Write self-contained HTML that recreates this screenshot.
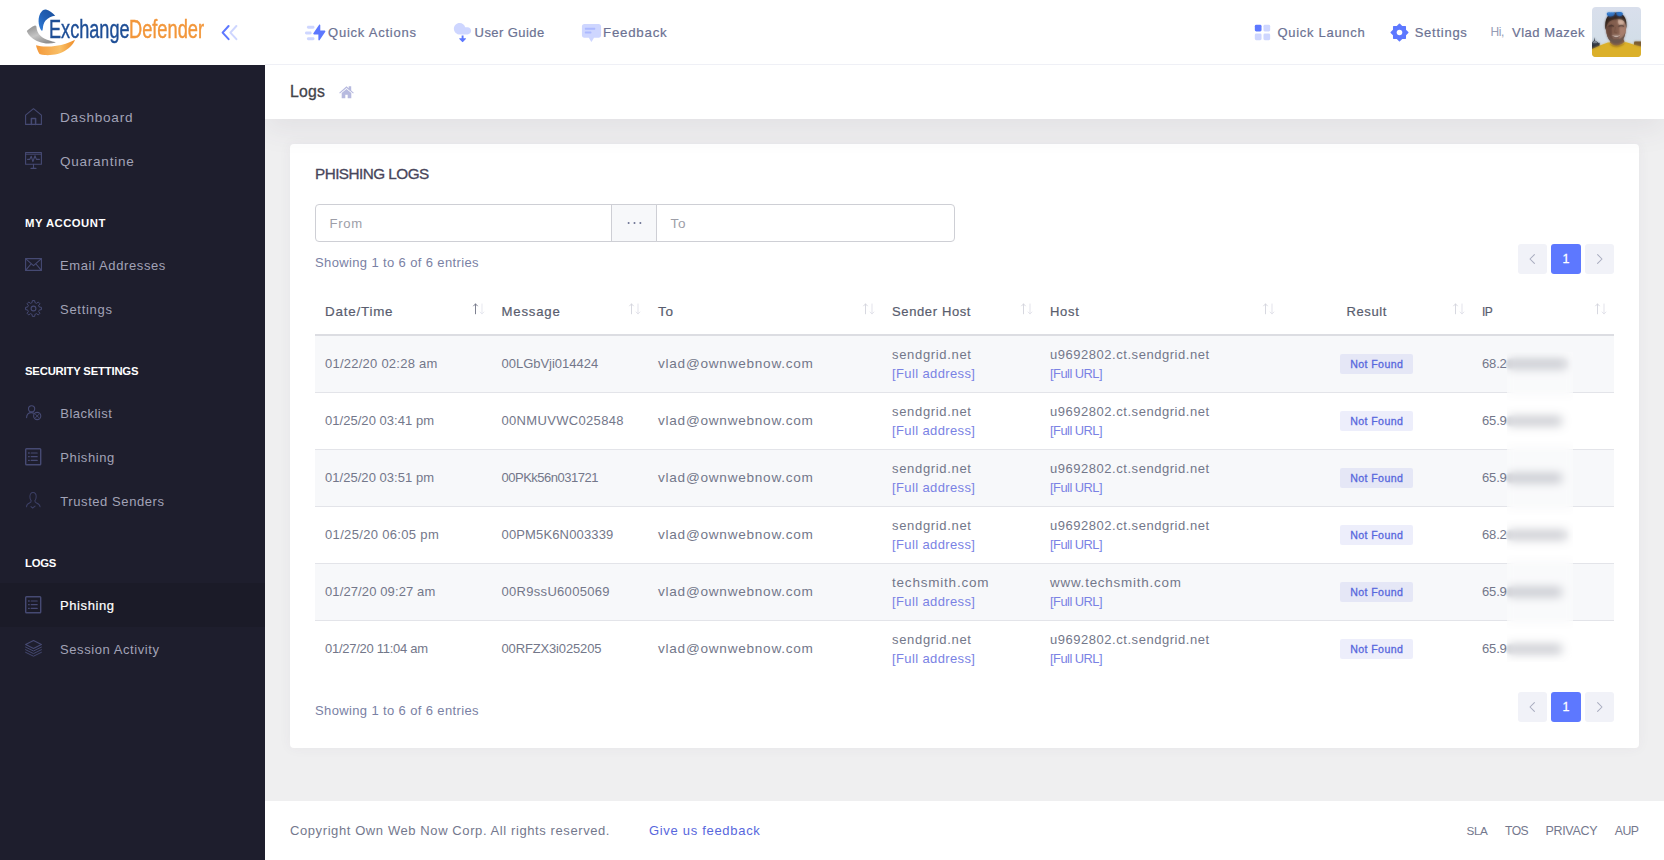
<!DOCTYPE html>
<html lang="en"><head><meta charset="utf-8"><title>ExchangeDefender - Phishing Logs</title>
<style>
*{box-sizing:border-box;margin:0;padding:0}
html,body{width:1664px;height:860px;overflow:hidden}
body{background:#efeff0;font-family:"Liberation Sans",sans-serif;font-size:14px;color:#646c9a;position:relative;-webkit-font-smoothing:antialiased}
a{text-decoration:none;color:inherit}
ul{list-style:none}
.m5{-webkit-text-stroke:0.3px currentColor}
.m4{-webkit-text-stroke:0.2px currentColor}
.abs{position:absolute;white-space:pre}
/* brand */
#brand{z-index:3;position:absolute;left:0;top:0;width:265px;height:65px;background:#fff}
#brand .logo-txt{-webkit-text-stroke:0.42px currentColor;position:absolute;left:49.2px;top:0;height:65px;white-space:pre;font-size:25.8px;line-height:1;transform-origin:0 0}
/* header */
#header{z-index:3;position:absolute;left:265px;top:0;width:1399px;height:65px;background:#fff;border-bottom:1px solid #eff0f6}
#header .hm{position:absolute;top:0;height:64px;display:flex;align-items:center;color:#6c7293;white-space:pre}
#header svg{position:absolute}
/* aside */
#aside{z-index:3;position:absolute;left:0;top:65px;width:265px;height:795px;background:#1e1e2d}
#aside ul{position:absolute;left:0;top:30px;width:265px}
#aside li.item{height:44px;display:flex;align-items:center;padding-left:25px;color:#a2a3b7;white-space:pre;position:relative}
#aside li.item svg{position:absolute;overflow:visible}
#aside li.item span.t{position:absolute;left:60px;top:0;height:44px;display:flex;align-items:center}
#aside li.item.active{background:#1b1b28;color:#fff}
#aside li.sec{height:40px;margin-top:20px;display:flex;align-items:center;padding-left:25px;color:#fff;font-weight:700;white-space:pre}
/* subheader */
#subheader{position:absolute;left:265px;top:65px;width:1399px;height:54px;background:#fff;box-shadow:0 10px 30px 0 rgba(72,66,90,.08);z-index:2}
#subheader h3{position:absolute;left:25px;top:0;height:54px;display:flex;align-items:center;font-weight:400;color:#434349;white-space:pre}
/* card */
#card{position:absolute;left:290px;top:144px;width:1349px;height:604px;background:#fff;border-radius:4px;box-shadow:0 0 13px 0 rgba(82,63,105,.05)}
#card h3.title{position:absolute;left:25px;top:13px;height:34px;display:flex;align-items:center;font-weight:400;color:#48465b;white-space:pre}
.igroup{position:absolute;left:25px;top:60px;width:640px;height:38px;display:flex}
.igroup .inp{height:38px;border:1px solid #cecfd5;background:#fff;display:flex;align-items:center;padding-left:13.5px;color:#9d9ea8;white-space:pre}
.igroup .inp.l{width:297px;border-radius:4px 0 0 4px}
.igroup .addon{width:46px;margin-left:-1px;height:38px;border:1px solid #cecfd5;background:#f7f8fa;display:flex;align-items:center;justify-content:center;color:#6c7293}
.igroup .inp.r{width:299px;margin-left:-1px;border-radius:0 4px 4px 0}
.info{position:absolute;left:25px;color:#7a81a4;white-space:pre;height:20px;display:flex;align-items:center}
.pager{position:absolute;height:29.5px;display:block}
.pager span{position:absolute;top:0;height:29.5px;border-radius:3px;background:#f1f2f8;display:flex;align-items:center;justify-content:center;color:#fff}
.pager span.on{background:#5d78ff}
/* table */
table#logs{position:absolute;left:25px;top:145px;width:1299px;border-collapse:separate;border-spacing:0;table-layout:fixed}
table#logs th{height:47px;border-bottom:2px solid #dcdde2;text-align:left;font-weight:400;color:#595d6e;padding:0 0 2px 10px;position:relative;white-space:pre;vertical-align:middle}
table#logs th svg{position:absolute;right:7px;top:14px}
table#logs td{height:57px;border-bottom:1px solid #e3e4e9;padding:0 0 1px 10px;color:#73778a;line-height:19px;vertical-align:middle;white-space:pre}
table#logs tr.odd td{background:#f7f8fa}
table#logs tr:last-child td{border-bottom-color:transparent}
table#logs td a{color:#7a82e4}
table#logs .c{text-align:center;padding-left:0}
table#logs th.c{padding-right:20px}
.badge{display:inline-flex;align-items:center;justify-content:center;width:73px;height:20px;padding-top:1.5px;position:relative;top:0.5px;border-radius:2px;background:rgba(88,103,221,.11);color:#5867dd;vertical-align:middle}
/* footer */
#footer{position:absolute;left:265px;top:801px;width:1399px;height:59px;background:#fff}
#footer .f{position:absolute;top:0;height:59px;display:flex;align-items:center;color:#74788d;white-space:pre}
#ipblur{position:absolute;left:1507px;top:352px;width:66px;height:309.5px;backdrop-filter:blur(4.6px);-webkit-backdrop-filter:blur(4.6px);background:rgba(255,255,255,.32)}
.smudge{display:inline-block;height:10px;border-radius:4px;background:rgba(90,94,112,.46);vertical-align:middle;margin-left:0;filter:blur(1.2px)}
</style></head>
<body>

<div id="brand">
 <svg style="position:absolute;left:24px;top:6px" width="56" height="52" viewBox="24 6 56 52">
  <defs>
   <linearGradient id="gb" x1="1" y1="0" x2="0" y2="1"><stop offset="0" stop-color="#1a4f9c"/><stop offset=".5" stop-color="#215fb4"/><stop offset="1" stop-color="#2f7fdc"/></linearGradient>
   <linearGradient id="gg" x1="0" y1="0" x2="0.600" y2="1"><stop offset="0" stop-color="#8a8a8a"/><stop offset=".55" stop-color="#c4c4c4"/><stop offset="1" stop-color="#909090"/></linearGradient>
   <linearGradient id="go" x1="0" y1="0" x2="1" y2="0"><stop offset="0" stop-color="#f3983a"/><stop offset=".62" stop-color="#f9c067"/><stop offset=".85" stop-color="#f3a040"/><stop offset="1" stop-color="#ef8f2c"/></linearGradient>
  </defs>
  <path d="M46,9.5 C49.6,10.6 52.800,13 55.200,15.700 C51.500,15.900 48.200,17.800 45.600,20.600 C43.800,22.800 43,25.800 42.900,28 C42.800,29.400 42.500,30.400 42.100,31 C40.600,30 39.300,27 38.800,24 C38.300,20.500 38.600,16.500 40.200,13.500 C41.600,11 43.600,9.300 46,9.500 Z" fill="url(#gb)"/>
  <path d="M26.800,31 C28.800,28.800 31.800,26.800 35,25.500 C36,25.600 36.300,26 36.400,26.600 C36.500,28.600 36.900,30.200 37.500,31.600 C38.600,34 40.200,35.800 42.200,37.200 C44.800,39 48,40.200 51,41 C53,41.600 54.800,42 55.800,42.400 C52.500,43.500 49,43.700 46,43.400 C42.800,43.100 39.600,42.300 36.900,41.100 C34.400,40 32.200,38.400 30.400,36.600 C28.800,35 27.600,33 26.800,31 Z" fill="url(#gg)"/>
  <path d="M36,45.300 C39.200,46.200 42.600,46.600 46,46.600 C49.600,46.600 53.200,46.300 56.500,45.700 C59.700,45.200 62.800,44.600 65.600,43.700 C69.200,42.600 72.400,41.300 75,39.800 C74.200,42.200 72.700,44.400 70.800,46.300 C68.400,48.800 65.500,50.700 62.300,52.200 C59.300,53.600 56,54.400 52.600,54.800 C50,55.200 47.300,55.300 44.700,55.100 C42.900,55 41.100,54.700 39.500,54.100 C38.500,52.800 37.800,51.200 37.300,49.600 C36.800,48.200 36.300,46.800 36,45.300 Z" fill="url(#go)"/>
 </svg>
 <span class="logo-txt" style="top:16.56px;height:26px;color:#1e4e96;transform:scaleX(0.7024)">Exchange</span>
 <span class="logo-txt" style="left:129.2px;top:16.56px;height:26px;color:#f2963a;transform:scaleX(0.7066)">Defender</span>
 <svg style="position:absolute;left:219px;top:22.3px" width="22" height="22" viewBox="0 0 22 22" fill="none" stroke-width="2" stroke-linecap="round" stroke-linejoin="round">
  <path d="M9.6,4 L3.6,10.6 L9.6,17.2" stroke="#5d78ff"/>
  <path d="M17.4,4 L11.4,10.6 L17.4,17.2" stroke="#5d78ff" opacity=".3"/>
 </svg>
</div>
<aside id="aside"><ul><li class="item"><svg style="left:25px;top:13px" width="17" height="17" viewBox="0 0 17 17" stroke="#464a73" fill="none" stroke-width="1.1" stroke-linejoin="round" stroke-linecap="round"><path d="M0.6,7.2 L8.5,0.7 L16.4,7.2 V16.4 H0.6 Z"/><path d="M6.4,16.4 V10.6 H10.6 V16.4" stroke-width="1.5"/></svg><span class="t" style="left:60px"><span style="font-size:13.6px;letter-spacing:0.750px;">Dashboard</span></span></li><li class="item"><svg style="left:25px;top:13px" width="17" height="17" viewBox="0 0 17 17" stroke="#464a73" fill="none" stroke-width="1.1" stroke-linejoin="round" stroke-linecap="round"><rect x="0.6" y="0.6" width="15.8" height="11.6"/><path d="M0.6,2.3 H16.4" stroke-width="0.9"/><path d="M2.6,7.4 H4.8 L6.2,4.2 L7.9,9.6 L10,3.8 L11.4,7.4 H14.4"/><path d="M8.5,12.2 V16 M6,16.4 H11"/></svg><span class="t" style="left:60px"><span style="font-size:13.5px;letter-spacing:0.769px;">Quarantine</span></span></li><li class="sec"><span style="font-size:11.3px;letter-spacing:0.485px;">MY ACCOUNT</span></li><li class="item"><svg style="left:25px;top:15px" width="17" height="14" viewBox="0 0 17 14" stroke="#464a73" fill="none" stroke-width="1.1" stroke-linejoin="round" stroke-linecap="round"><rect x="0.6" y="0.6" width="15.8" height="11.8"/><path d="M0.8,0.8 L8.5,7.6 L16.2,0.8 M0.8,12.2 L6,6 M16.2,12.2 L11,6"/></svg><span class="t" style="left:60px"><span style="font-size:13.0px;letter-spacing:0.611px;">Email Addresses</span></span></li><li class="item"><svg style="left:25px;top:13px" width="17" height="17" viewBox="0 0 17 17" stroke="#464a73" fill="none" stroke-width="1.1" stroke-linejoin="round" stroke-linecap="round"><path d="M14.04,6.20 L14.32,7.04 L16.41,7.33 L16.41,9.67 L14.32,9.96 L14.04,10.80 L13.65,11.58 L14.93,13.27 L13.27,14.93 L11.58,13.65 L10.80,14.04 L9.96,14.32 L9.67,16.41 L7.33,16.41 L7.04,14.32 L6.20,14.04 L5.42,13.65 L3.73,14.93 L2.07,13.27 L3.35,11.58 L2.96,10.80 L2.68,9.96 L0.59,9.67 L0.59,7.33 L2.68,7.04 L2.96,6.20 L3.35,5.42 L2.07,3.73 L3.73,2.07 L5.42,3.35 L6.20,2.96 L7.04,2.68 L7.33,0.59 L9.67,0.59 L9.96,2.68 L10.80,2.96 L11.58,3.35 L13.27,2.07 L14.93,3.73 L13.65,5.42Z" stroke-width="1"/><circle cx="8.5" cy="8.5" r="2.4"/></svg><span class="t" style="left:60px"><span style="font-size:13.0px;letter-spacing:0.715px;">Settings</span></span></li><li class="sec"><span style="font-size:11.3px;letter-spacing:-0.191px;">SECURITY SETTINGS</span></li><li class="item"><svg style="left:26px;top:14px" width="16" height="16" viewBox="0 0 16 16" stroke="#464a73" fill="none" stroke-width="1.1" stroke-linejoin="round" stroke-linecap="round"><circle cx="5.6" cy="3.8" r="3.1"/><path d="M0.6,12.6 C0.6,9.4 2.6,7.6 5.4,7.6 C6.3,7.6 7.1,7.8 7.8,8.2"/><circle cx="11.2" cy="11" r="3.6"/><path d="M9.6,9.4 L12.8,12.6 M12.8,9.4 L9.6,12.6" stroke-width="0.9"/></svg><span class="t" style="left:60.3px"><span style="font-size:13.0px;letter-spacing:0.474px;">Blacklist</span></span></li><li class="item"><svg style="left:25.2px;top:13px" width="17" height="18" viewBox="0 0 17 18" stroke="#464a73" fill="none" stroke-width="1.1" stroke-linejoin="round" stroke-linecap="round"><rect x="0.7" y="0.7" width="15" height="16" rx="0.8" stroke-width="1.4"/><path d="M6.2,5 H12.2 M6.2,8.7 H12.2 M6.2,12.4 H12.2" stroke-width="1.2"/><path d="M3.6,5 H4.2 M3.6,8.7 H4.2 M3.6,12.4 H4.2" stroke-width="1.3"/></svg><span class="t" style="left:60.3px"><span style="font-size:13.0px;letter-spacing:0.592px;">Phishing</span></span></li><li class="item"><svg style="left:26.3px;top:13px" width="14.8" height="17.4" viewBox="0 0 16 18" preserveAspectRatio="none" stroke="#3d4066" fill="none" stroke-width="1.1" stroke-linejoin="round" stroke-linecap="round"><path d="M7.6,0.6 C9.9,0.6 11,2.4 11,4.8 C11,6.6 10.4,8 9.6,8.8 C9.4,10.2 9.8,10.8 11.4,11.4 C13.4,12.2 15,13 15.2,15.2 M7.6,0.6 C5.3,0.6 4.2,2.4 4.2,4.8 C4.2,6.6 4.8,8 5.6,8.8 C5.8,10.2 5.4,10.8 3.8,11.4 C1.8,12.2 0.6,13 0.6,15.2 M5.4,15.2 L7.2,16.6 L9.8,14.6"/></svg><span class="t" style="left:60.3px"><span style="font-size:13.0px;letter-spacing:0.578px;">Trusted Senders</span></span></li><li class="sec"><span style="font-size:11.3px;letter-spacing:-0.212px;">LOGS</span></li><li class="item active"><svg style="left:25.2px;top:13px" width="17" height="18" viewBox="0 0 17 18" stroke="#464a73" fill="none" stroke-width="1.1" stroke-linejoin="round" stroke-linecap="round"><rect x="0.7" y="0.7" width="15" height="16" rx="0.8" stroke-width="1.4"/><path d="M6.2,5 H12.2 M6.2,8.7 H12.2 M6.2,12.4 H12.2" stroke-width="1.2"/><path d="M3.6,5 H4.2 M3.6,8.7 H4.2 M3.6,12.4 H4.2" stroke-width="1.3"/></svg><span class="t" style="left:60px"><span class="m4" style="font-size:13.0px;letter-spacing:0.592px;">Phishing</span></span></li><li class="item"><svg style="left:25px;top:13px" width="17" height="18" viewBox="0 0 17 18" stroke="#464a73" fill="none" stroke-width="1.1" stroke-linejoin="round" stroke-linecap="round"><path d="M8.5,0.6 L16.4,4.500 L8.5,8.400 L0.6,4.500 Z"/><path d="M0.6,7.100 L8.5,11 L16.4,7.100 M0.6,9.700 L8.5,13.600 L16.4,9.700 M0.6,12.300 L8.5,16.200 L16.4,12.300" stroke-width="0.95"/></svg><span class="t" style="left:60px"><span style="font-size:13.0px;letter-spacing:0.581px;">Session Activity</span></span></li></ul></aside>
<header id="header"><svg style="left:39px;top:21px" width="23" height="23" viewBox="0 0 24 24"><path d="M16.37,19.94 L22.22,11.17 C22.45,10.82 22.36,10.36 22.01,10.13 C21.89,10.04 21.75,10 21.6,10 L17,10 L17,4.48 C17,4.06 16.66,3.73 16.25,3.73 C16,3.73 15.77,3.85 15.63,4.06 L9.78,12.83 C9.55,13.18 9.64,13.64 9.99,13.87 C10.11,13.96 10.25,14 10.4,14 L15,14 L15,19.52 C15,19.94 15.34,20.27 15.75,20.27 C16,20.27 16.23,20.15 16.37,19.94 Z" fill="#5d78ff"/><path d="M4.5,5 L9.5,5 C10.33,5 11,5.67 11,6.5 C11,7.33 10.33,8 9.5,8 L4.5,8 C3.67,8 3,7.33 3,6.5 C3,5.67 3.67,5 4.5,5 Z M4.5,17 L9.5,17 C10.33,17 11,17.67 11,18.5 C11,19.33 10.33,20 9.5,20 L4.5,20 C3.67,20 3,19.33 3,18.5 C3,17.67 3.67,17 4.5,17 Z M2.5,11 L6.5,11 C7.33,11 8,11.67 8,12.5 C8,13.33 7.33,14 6.5,14 L2.5,14 C1.67,14 1,13.33 1,12.5 C1,11.67 1.67,11 2.5,11 Z" fill="#5d78ff" opacity=".3"/></svg><div class="hm" style="left:63.0px;"><span class="m4" style="font-size:13.0px;letter-spacing:0.768px;">Quick Actions</span></div><svg style="left:185.8px;top:21px" width="23" height="23" viewBox="0 0 24 24"><path d="M5.75,13.04 C4.09,11.97 3,10.11 3,8 C3,4.69 5.69,2 9,2 C11.8,2 14.14,3.91 14.81,6.5 L17.25,6.5 C19.32,6.5 21,8.18 21,10.25 C21,12.32 19.32,14 17.25,14 L8.25,14 C7.29,14 6.41,13.64 5.75,13.04 Z" fill="#5d78ff" opacity=".3"/><path d="M11.1,15.2 H13.1 V18 H15.2 C15.6,18 15.8,18.5 15.5,18.8 L12.5,22 C12.3,22.2 11.9,22.2 11.7,22 L8.7,18.8 C8.4,18.5 8.6,18 9,18 H11.1 Z" fill="#5d78ff"/></svg><div class="hm" style="left:209.6px;"><span class="m4" style="font-size:13.0px;letter-spacing:0.424px;">User Guide</span></div><svg style="left:315.2px;top:21px" width="23" height="23" viewBox="0 0 24 24"><path d="M4.5,3.2 H19.5 C20.9,3.2 22,4.3 22,5.7 V14.9 C22,16.3 20.9,17.4 19.5,17.4 H14.6 L12.3,21.4 C12.1,21.7 11.7,21.7 11.5,21.400 L9.200,17.400 H4.500 C3.100,17.400 2,16.300 2,14.900 V5.700 C2,4.300 3.100,3.200 4.500,3.200 Z" fill="#5d78ff" opacity=".3"/><path d="M6,7 H15 C15.55,7 16,7.45 16,8 C16,8.55 15.55,9 15,9 H6 C5.45,9 5,8.55 5,8 C5,7.45 5.45,7 6,7 Z M6,11 H11 C11.55,11 12,11.45 12,12 C12,12.55 11.55,13 11,13 H6 C5.45,13 5,12.55 5,12 C5,11.45 5.45,11 6,11 Z" fill="#5d78ff" opacity=".3"/></svg><div class="hm" style="left:338.0px;"><span class="m4" style="font-size:13.3px;letter-spacing:0.764px;">Feedback</span></div><svg style="left:986px;top:21.2px" width="23" height="23" viewBox="0 0 24 24"><rect x="4" y="4" width="7" height="7" rx="1.5" fill="#5d78ff"/><rect x="13" y="4" width="7" height="7" rx="1.5" fill="#5d78ff" opacity=".3"/><rect x="4" y="13" width="7" height="7" rx="1.5" fill="#5d78ff" opacity=".3"/><rect x="13" y="13" width="7" height="7" rx="1.5" fill="#5d78ff" opacity=".3"/></svg><div class="hm" style="left:1012.5px;"><span class="m4" style="font-size:13.0px;letter-spacing:0.700px;">Quick Launch</span></div><svg style="left:1122.7px;top:21px" width="23" height="23" viewBox="0 0 24 24"><g fill="#5d78ff"><rect x="5.2" y="5.2" width="13.6" height="13.6" rx="0.7"/><rect x="5.15" y="5.15" width="13.7" height="13.7" rx="0.7" transform="rotate(45 12 12)"/></g><circle cx="12" cy="12" r="2.9" fill="#fff"/></svg><div class="hm" style="left:1149.7px;"><span class="m4" style="font-size:13.0px;letter-spacing:0.744px;">Settings</span></div><div class="hm" style="left:1225.6px;color:#959cb6;"><span style="font-size:12.0px;letter-spacing:-0.520px;">Hi,</span></div><div class="hm" style="left:1247.0px;"><span class="m4" style="font-size:13.0px;letter-spacing:0.501px;">Vlad Mazek</span></div><svg style="left:1327px;top:7px;border-radius:4px" width="49" height="50" viewBox="0 0 49 50">
     <defs><linearGradient id="sky" x1="0" y1="0" x2="0" y2="1"><stop offset="0" stop-color="#d9dfec"/><stop offset="1" stop-color="#cfdde6"/></linearGradient>
     <filter id="bl" x="-10%" y="-10%" width="120%" height="120%"><feGaussianBlur stdDeviation="0.8"/></filter></defs>
     <rect width="49" height="50" fill="url(#sky)"/>
     <g>
      <path d="M-1,36.500 L0.500,35 L2,33.500 L2.300,30.300 L2.900,33.500 L5.500,35 L7,36.500 L7.600,35.500 L7.600,44 L-1,46 Z" fill="#2f343f"/>
      <path d="M0.500,35.800 C1.500,33.800 4,33.800 5.600,35.800 Z" fill="#a9b3c2"/>
      <path d="M42,36 L42.500,34.600 L50,34.400 L50,42 L42,40 Z" fill="#7a5c34"/>
      <path d="M-2,52 L-2,42.800 C4,40 10,38 16,35.600 L34,35.200 C39,36.800 45,38.400 51,40.200 L51,52 Z" fill="#dbb02a"/>
      <path d="M17,36.500 C20,41.800 29,41.800 33.500,36 C29,38.500 21,38.800 17,36.500 Z" fill="#b98f1c"/>
      <path d="M18,35.500 C21,39.500 28,39.500 32.500,35 L31,31 L19,31 Z" fill="#7d5a4a"/>
      <ellipse cx="23.900" cy="21.500" rx="10" ry="14.600" fill="#85604f"/><path d="M14.200,20 C14.200,28 17,34 22,36 C20,30 19.500,24 20,17 Z" fill="#5f4238" opacity=".7"/>
      <path d="M24,8 C30,8 33.800,12 33.800,21 C33.800,27 31,33 27,35.500 C28,27 28,16 24,8 Z" fill="#b48a78" opacity=".75"/>
      <ellipse cx="29" cy="14.500" rx="3" ry="3.600" fill="#d9b9a6" opacity=".85"/>
      <path d="M13.400,23 C12.200,12 16,5.600 24,5.600 C32,5.600 35.400,12 34.400,22 C33.800,16.500 32.500,13 28.500,12.400 C23,11.600 18.500,12.500 16.200,16 C15,18 14.200,20.500 13.400,23 Z" fill="#35261f"/>
      <path d="M14.600,25 C15.500,33 19.500,36.600 24,36.600 C28.500,36.600 32.500,33 33.400,25 C31.500,30 28.500,32.400 24,32.400 C19.500,32.400 16.500,30 14.600,25 Z" fill="#6a574e"/>
      <path d="M19.500,28 C22,30.800 26.500,30.800 29,28 C26.500,29 22,29 19.500,28 Z" fill="#e9d9d0"/>
      <path d="M19,27.600 C22,32.500 26.500,32.500 29.500,27.600 C26.500,31 22,31 19,27.600 Z" fill="#5a3a34"/>
      <path d="M16.500,19.500 C18,18.500 20.500,18.500 22,19.500 M26.500,19.500 C28,18.500 30.500,18.500 32,19.500" stroke="#3a2a26" stroke-width="1.400" fill="none"/>
      <path d="M23.500,20 L22.500,25.500 L25,25.800" stroke="#6f4d40" stroke-width="0.900" fill="none"/>
      <path d="M14.800,6.400 C15.200,4.800 21.500,4.600 22.800,5.600 C23.300,7.600 21.500,9.400 18.500,9.400 C16,9.400 14.600,8.200 14.800,6.400 Z" fill="#2f74c6"/>
      <path d="M24.200,5.600 C25.500,4.600 30.200,4.800 30.800,6.200 C31,8 29.500,9.200 27.500,9.200 C25.200,9.200 24,7.800 24.200,5.600 Z" fill="#2f74c6"/>
      <path d="M16,6 C18,5.300 21,5.300 22.500,6" stroke="#7fb2ea" stroke-width="0.800" fill="none"/>
     </g><g filter="url(#bl)" opacity=".62">
      <path d="M-1,36.500 L0.500,35 L2,33.500 L2.300,30.300 L2.900,33.500 L5.500,35 L7,36.500 L7.600,35.500 L7.600,44 L-1,46 Z" fill="#2f343f"/>
      <path d="M0.500,35.800 C1.500,33.800 4,33.800 5.600,35.800 Z" fill="#a9b3c2"/>
      <path d="M42,36 L42.500,34.600 L50,34.400 L50,42 L42,40 Z" fill="#7a5c34"/>
      <path d="M-2,52 L-2,42.800 C4,40 10,38 16,35.600 L34,35.200 C39,36.800 45,38.400 51,40.200 L51,52 Z" fill="#dbb02a"/>
      <path d="M17,36.500 C20,41.800 29,41.800 33.500,36 C29,38.500 21,38.800 17,36.500 Z" fill="#b98f1c"/>
      <path d="M18,35.500 C21,39.500 28,39.500 32.500,35 L31,31 L19,31 Z" fill="#7d5a4a"/>
      <ellipse cx="23.900" cy="21.500" rx="10" ry="14.600" fill="#85604f"/><path d="M14.200,20 C14.200,28 17,34 22,36 C20,30 19.500,24 20,17 Z" fill="#5f4238" opacity=".7"/>
      <path d="M24,8 C30,8 33.800,12 33.800,21 C33.800,27 31,33 27,35.500 C28,27 28,16 24,8 Z" fill="#b48a78" opacity=".75"/>
      <ellipse cx="29" cy="14.500" rx="3" ry="3.600" fill="#d9b9a6" opacity=".85"/>
      <path d="M13.400,23 C12.200,12 16,5.600 24,5.600 C32,5.600 35.400,12 34.400,22 C33.800,16.500 32.500,13 28.500,12.400 C23,11.600 18.500,12.500 16.200,16 C15,18 14.200,20.500 13.400,23 Z" fill="#35261f"/>
      <path d="M14.600,25 C15.500,33 19.500,36.600 24,36.600 C28.500,36.600 32.500,33 33.400,25 C31.500,30 28.500,32.400 24,32.400 C19.500,32.400 16.500,30 14.600,25 Z" fill="#6a574e"/>
      <path d="M19.500,28 C22,30.800 26.500,30.800 29,28 C26.500,29 22,29 19.500,28 Z" fill="#e9d9d0"/>
      <path d="M19,27.600 C22,32.500 26.500,32.500 29.500,27.600 C26.500,31 22,31 19,27.600 Z" fill="#5a3a34"/>
      <path d="M16.500,19.500 C18,18.500 20.500,18.500 22,19.500 M26.500,19.500 C28,18.500 30.500,18.500 32,19.500" stroke="#3a2a26" stroke-width="1.400" fill="none"/>
      <path d="M23.500,20 L22.500,25.500 L25,25.800" stroke="#6f4d40" stroke-width="0.900" fill="none"/>
      <path d="M14.800,6.400 C15.200,4.800 21.500,4.600 22.800,5.600 C23.300,7.600 21.500,9.400 18.500,9.400 C16,9.400 14.600,8.200 14.800,6.400 Z" fill="#2f74c6"/>
      <path d="M24.200,5.600 C25.500,4.600 30.200,4.800 30.800,6.200 C31,8 29.500,9.200 27.500,9.200 C25.200,9.200 24,7.800 24.200,5.600 Z" fill="#2f74c6"/>
      <path d="M16,6 C18,5.300 21,5.300 22.500,6" stroke="#7fb2ea" stroke-width="0.800" fill="none"/>
     </g></svg></header>
<main>
<div id="subheader"><h3><span class="m5" style="font-size:15.8px;letter-spacing:0.238px;">Logs</span></h3>
    <svg style="position:absolute;left:74px;top:20.6px" width="15" height="13" viewBox="0 0 15 13"><path d="M7.5,0.3 L9.700,2.200 V0.300 H12.200 V4.400 L14.800,6.700 L14.100,7.500 L7.500,1.900 L0.900,7.500 L0.200,6.700 Z" fill="#b7badf"/><path d="M7.500,2.900 L12.300,7 V12.300 H8.700 V8.800 H6.300 V12.300 H2.700 V7 Z" fill="#b7badf"/></svg>
    </div>
<div id="card"><h3 class="title"><span class="m5" style="font-size:15.3px;letter-spacing:-0.543px;">PHISHING LOGS</span></h3><div class="igroup"><div class="inp l"><span style="font-size:13.1px;letter-spacing:0.737px;">From</span></div><div class="addon"><svg width="15" height="4" viewBox="0 0 15 4"><circle cx="1.600" cy="2" r="1" fill="#6c7293"/><circle cx="7.500" cy="2" r="1" fill="#6c7293"/><circle cx="13.400" cy="2" r="1" fill="#6c7293"/></svg></div><div class="inp r"><span style="font-size:13.5px;letter-spacing:0.758px;">To</span></div></div><div class="info" style="top:108.19999999999999px"><span style="font-size:13.0px;letter-spacing:0.372px;">Showing 1 to 6 of 6 entries</span></div><div class="pager" style="left:1228px;top:100.19999999999999px;width:96px">
      <span style="left:0;width:29px"><svg width="9" height="12" viewBox="0 0 9 12" fill="none" stroke="#a9acbf" stroke-width="1.05" stroke-linecap="round" stroke-linejoin="round"><path d="M6.400,1.600 L2,6 L6.400,10.400"/></svg></span><span class="on" style="left:33.2px;width:29.800px"><b class="m5" style="font-weight:400;font-size:12.5px">1</b></span><span style="left:67px;width:29px"><svg width="9" height="12" viewBox="0 0 9 12" fill="none" stroke="#a9acbf" stroke-width="1.05" stroke-linecap="round" stroke-linejoin="round"><path d="M2.600,1.600 L7,6 L2.600,10.400"/></svg></span></div><table id="logs"><colgroup><col style="width:176.5px"><col style="width:156.5px"><col style="width:234px"><col style="width:158px"><col style="width:241.5px"><col style="width:190.5px"><col style="width:142px"></colgroup><thead><tr><th><span class="m4" style="font-size:13.4px;letter-spacing:0.787px;">Date/Time</span><svg width="13" height="12" viewBox="0 0 13 12" fill="none" stroke-linecap="round" stroke-linejoin="round" stroke-width="0.95"><path d="M3.5,10.800 V1 M1.600,2.900 L3.500,0.900 L5.400,2.900" stroke="#777a8b"/><path d="M10,1 V10.800 M8.100,9 L10,11 L11.900,9" stroke="#e6e7ee"/></svg></th><th><span class="m4" style="font-size:13.2px;letter-spacing:0.785px;">Message</span><svg width="13" height="12" viewBox="0 0 13 12" fill="none" stroke-linecap="round" stroke-linejoin="round" stroke-width="0.95"><path d="M3.5,10.800 V1 M1.600,2.900 L3.500,0.900 L5.400,2.900" stroke="#d5d6de"/><path d="M10,1 V10.800 M8.100,9 L10,11 L11.900,9" stroke="#e1e2ea"/></svg></th><th><span class="m4" style="font-size:13.5px;letter-spacing:0.758px;">To</span><svg width="13" height="12" viewBox="0 0 13 12" fill="none" stroke-linecap="round" stroke-linejoin="round" stroke-width="0.95"><path d="M3.5,10.800 V1 M1.600,2.900 L3.500,0.900 L5.400,2.900" stroke="#d5d6de"/><path d="M10,1 V10.800 M8.100,9 L10,11 L11.900,9" stroke="#e1e2ea"/></svg></th><th><span class="m4" style="font-size:13.0px;letter-spacing:0.622px;">Sender Host</span><svg width="13" height="12" viewBox="0 0 13 12" fill="none" stroke-linecap="round" stroke-linejoin="round" stroke-width="0.95"><path d="M3.5,10.800 V1 M1.600,2.900 L3.500,0.900 L5.400,2.900" stroke="#d5d6de"/><path d="M10,1 V10.800 M8.100,9 L10,11 L11.900,9" stroke="#e1e2ea"/></svg></th><th><span class="m4" style="font-size:13.0px;letter-spacing:0.728px;">Host</span><svg width="13" height="12" viewBox="0 0 13 12" fill="none" stroke-linecap="round" stroke-linejoin="round" stroke-width="0.95"><path d="M3.5,10.800 V1 M1.600,2.900 L3.500,0.900 L5.400,2.900" stroke="#d5d6de"/><path d="M10,1 V10.800 M8.100,9 L10,11 L11.900,9" stroke="#e1e2ea"/></svg></th><th class="c"><span class="m4" style="font-size:13.0px;letter-spacing:0.569px;">Result</span><svg width="13" height="12" viewBox="0 0 13 12" fill="none" stroke-linecap="round" stroke-linejoin="round" stroke-width="0.95"><path d="M3.5,10.800 V1 M1.600,2.900 L3.500,0.900 L5.400,2.900" stroke="#d5d6de"/><path d="M10,1 V10.800 M8.100,9 L10,11 L11.900,9" stroke="#e1e2ea"/></svg></th><th><span class="m4" style="font-size:12.0px;letter-spacing:-0.540px;">IP</span><svg width="13" height="12" viewBox="0 0 13 12" fill="none" stroke-linecap="round" stroke-linejoin="round" stroke-width="0.95"><path d="M3.5,10.800 V1 M1.600,2.900 L3.500,0.900 L5.400,2.900" stroke="#d5d6de"/><path d="M10,1 V10.800 M8.100,9 L10,11 L11.900,9" stroke="#e1e2ea"/></svg></th></tr></thead><tbody><tr class="odd"><td><span style="font-size:13.0px;letter-spacing:0.242px;">01/22/20 02:28 am</span></td><td><span style="font-size:13.0px;letter-spacing:-0.019px;">00LGbVji014424</span></td><td><span style="font-size:13.6px;letter-spacing:0.746px;">vlad@ownwebnow.com</span></td><td><span style="font-size:13.0px;letter-spacing:0.676px;">sendgrid.net</span><br><a><span style="font-size:13.0px;letter-spacing:0.380px;">[Full address]</span></a></td><td><span style="font-size:13.0px;letter-spacing:0.535px;">u9692802.ct.sendgrid.net</span><br><a><span style="font-size:12.9px;letter-spacing:-0.527px;">[Full URL]</span></a></td><td class="c"><span class="badge"><span class="m5" style="font-size:10.6px;letter-spacing:0.387px;">Not Found</span></span></td><td><span style="font-size:13.0px;letter-spacing:-0.162px;">68.2</span><i class="smudge" style="width:60px"></i></td></tr><tr><td><span style="font-size:13.0px;letter-spacing:0.036px;">01/25/20 03:41 pm</span></td><td><span style="font-size:13.0px;letter-spacing:0.325px;">00NMUVWC025848</span></td><td><span style="font-size:13.6px;letter-spacing:0.746px;">vlad@ownwebnow.com</span></td><td><span style="font-size:13.0px;letter-spacing:0.676px;">sendgrid.net</span><br><a><span style="font-size:13.0px;letter-spacing:0.380px;">[Full address]</span></a></td><td><span style="font-size:13.0px;letter-spacing:0.535px;">u9692802.ct.sendgrid.net</span><br><a><span style="font-size:12.9px;letter-spacing:-0.527px;">[Full URL]</span></a></td><td class="c"><span class="badge"><span class="m5" style="font-size:10.6px;letter-spacing:0.387px;">Not Found</span></span></td><td><span style="font-size:13.0px;letter-spacing:-0.162px;">65.9</span><i class="smudge" style="width:55px"></i></td></tr><tr class="odd"><td><span style="font-size:13.0px;letter-spacing:0.036px;">01/25/20 03:51 pm</span></td><td><span style="font-size:13.0px;letter-spacing:-0.488px;">00PKk56n031721</span></td><td><span style="font-size:13.6px;letter-spacing:0.746px;">vlad@ownwebnow.com</span></td><td><span style="font-size:13.0px;letter-spacing:0.676px;">sendgrid.net</span><br><a><span style="font-size:13.0px;letter-spacing:0.380px;">[Full address]</span></a></td><td><span style="font-size:13.0px;letter-spacing:0.535px;">u9692802.ct.sendgrid.net</span><br><a><span style="font-size:12.9px;letter-spacing:-0.527px;">[Full URL]</span></a></td><td class="c"><span class="badge"><span class="m5" style="font-size:10.6px;letter-spacing:0.387px;">Not Found</span></span></td><td><span style="font-size:13.0px;letter-spacing:-0.162px;">65.9</span><i class="smudge" style="width:55px"></i></td></tr><tr><td><span style="font-size:13.0px;letter-spacing:0.333px;">01/25/20 06:05 pm</span></td><td><span style="font-size:13.0px;letter-spacing:0.146px;">00PM5K6N003339</span></td><td><span style="font-size:13.6px;letter-spacing:0.746px;">vlad@ownwebnow.com</span></td><td><span style="font-size:13.0px;letter-spacing:0.676px;">sendgrid.net</span><br><a><span style="font-size:13.0px;letter-spacing:0.380px;">[Full address]</span></a></td><td><span style="font-size:13.0px;letter-spacing:0.535px;">u9692802.ct.sendgrid.net</span><br><a><span style="font-size:12.9px;letter-spacing:-0.527px;">[Full URL]</span></a></td><td class="c"><span class="badge"><span class="m5" style="font-size:10.6px;letter-spacing:0.387px;">Not Found</span></span></td><td><span style="font-size:13.0px;letter-spacing:-0.162px;">68.2</span><i class="smudge" style="width:60px"></i></td></tr><tr class="odd"><td><span style="font-size:13.0px;letter-spacing:0.117px;">01/27/20 09:27 am</span></td><td><span style="font-size:13.0px;letter-spacing:0.303px;">00R9ssU6005069</span></td><td><span style="font-size:13.6px;letter-spacing:0.746px;">vlad@ownwebnow.com</span></td><td><span style="font-size:13.5px;letter-spacing:0.791px;">techsmith.com</span><br><a><span style="font-size:13.0px;letter-spacing:0.380px;">[Full address]</span></a></td><td><span style="font-size:13.4px;letter-spacing:0.784px;">www.techsmith.com</span><br><a><span style="font-size:12.9px;letter-spacing:-0.527px;">[Full URL]</span></a></td><td class="c"><span class="badge"><span class="m5" style="font-size:10.6px;letter-spacing:0.387px;">Not Found</span></span></td><td><span style="font-size:13.0px;letter-spacing:-0.162px;">65.9</span><i class="smudge" style="width:55px"></i></td></tr><tr><td><span style="font-size:13.0px;letter-spacing:-0.278px;">01/27/20 11:04 am</span></td><td><span style="font-size:13.0px;letter-spacing:-0.148px;">00RFZX3i025205</span></td><td><span style="font-size:13.6px;letter-spacing:0.746px;">vlad@ownwebnow.com</span></td><td><span style="font-size:13.0px;letter-spacing:0.676px;">sendgrid.net</span><br><a><span style="font-size:13.0px;letter-spacing:0.380px;">[Full address]</span></a></td><td><span style="font-size:13.0px;letter-spacing:0.535px;">u9692802.ct.sendgrid.net</span><br><a><span style="font-size:12.9px;letter-spacing:-0.527px;">[Full URL]</span></a></td><td class="c"><span class="badge"><span class="m5" style="font-size:10.6px;letter-spacing:0.387px;">Not Found</span></span></td><td><span style="font-size:13.0px;letter-spacing:-0.162px;">65.9</span><i class="smudge" style="width:55px"></i></td></tr></tbody></table><div class="info" style="top:556.2px"><span style="font-size:13.0px;letter-spacing:0.372px;">Showing 1 to 6 of 6 entries</span></div><div class="pager" style="left:1228px;top:548px;width:96px">
      <span style="left:0;width:29px"><svg width="9" height="12" viewBox="0 0 9 12" fill="none" stroke="#a9acbf" stroke-width="1.05" stroke-linecap="round" stroke-linejoin="round"><path d="M6.400,1.600 L2,6 L6.400,10.400"/></svg></span><span class="on" style="left:33.2px;width:29.800px"><b class="m5" style="font-weight:400;font-size:12.5px">1</b></span><span style="left:67px;width:29px"><svg width="9" height="12" viewBox="0 0 9 12" fill="none" stroke="#a9acbf" stroke-width="1.05" stroke-linecap="round" stroke-linejoin="round"><path d="M2.600,1.600 L7,6 L2.600,10.400"/></svg></span></div></div>
<div id="ipblur"></div>
</main>
<footer id="footer"><div class="f" style="left:25.0px;"><span style="font-size:13.0px;letter-spacing:0.592px;">Copyright Own Web Now Corp. All rights reserved.</span></div><div class="f" style="left:383.9px;color:#5867dd;"><span style="font-size:13.0px;letter-spacing:0.701px;">Give us feedback</span></div><div class="f" style="left:1201.6px;"><span style="font-size:11.7px;letter-spacing:-0.486px;">SLA</span></div><div class="f" style="left:1240.0px;"><span style="font-size:12.1px;letter-spacing:-0.542px;">TOS</span></div><div class="f" style="left:1280.4px;"><span style="font-size:12.5px;letter-spacing:-0.306px;">PRIVACY</span></div><div class="f" style="left:1349.7px;"><span style="font-size:12.3px;letter-spacing:-0.488px;">AUP</span></div></footer>
</body></html>
